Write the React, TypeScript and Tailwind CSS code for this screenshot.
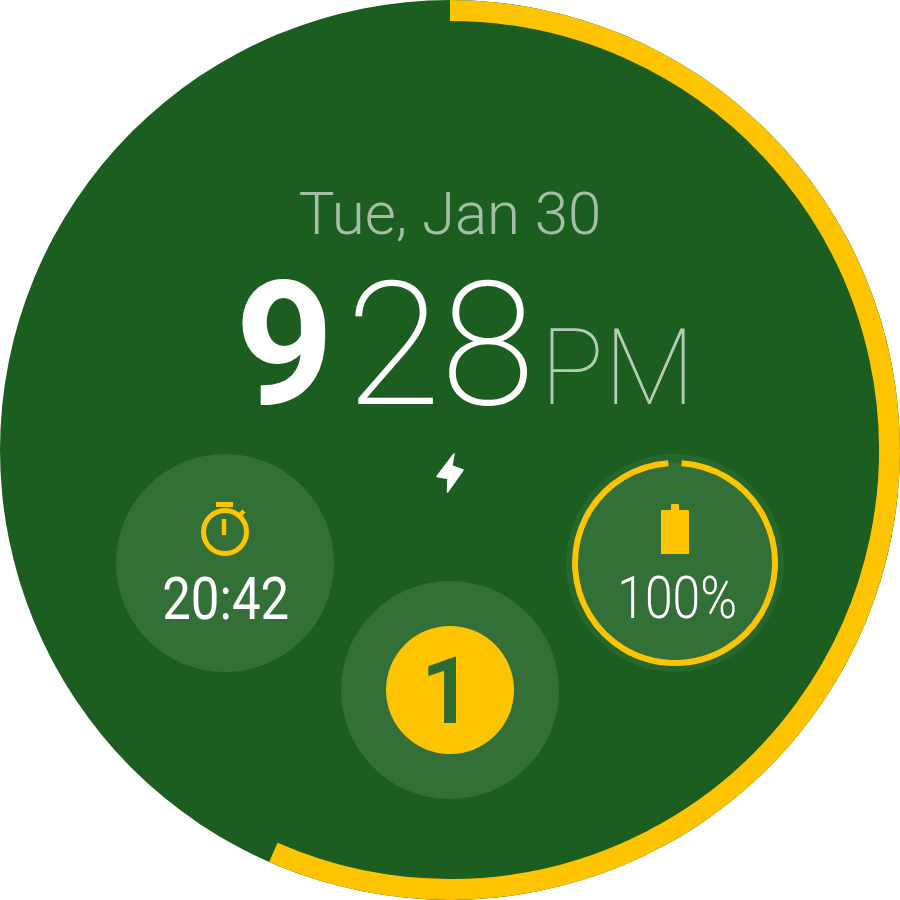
const font = "[font-family:Roboto,'Liberation_Sans',sans-serif]";

function Stopwatch() {
  return (
    <svg width="56" height="56" viewBox="0 0 56 56" className="block" fill="none">
      <circle cx="28" cy="31" r="21.5" stroke="#ffc400" strokeWidth="5" />
      <path d="M19 3.500h17" stroke="#ffc400" strokeWidth="5" />
      <path d="M27 18v16" stroke="#ffc400" strokeWidth="4.500" />
      <path d="M42 15l5-5" stroke="#ffc400" strokeWidth="4.500" />
    </svg>
  );
}

function Battery() {
  return (
    <svg width="28" height="50" viewBox="0 0 28 50" className="block">
      <path d="M10 1q0-1 1-1h6q1 0 1 1v5h9q1 0 1 1v43H0V7q0-1 1-1h9z" fill="#ffc400" />
    </svg>
  );
}

function Bolt() {
  return (
    <svg width="32" height="44" viewBox="435 452 32 44" className="block">
      <path
        d="M455 454l-2 12 11 4-15.500 22 .5-13.500-11-2z"
        fill="#ffffff"
        stroke="#ffffff"
        strokeWidth="1.500"
        strokeLinejoin="round"
      />
    </svg>
  );
}

function Ring({ size, stroke, start, end, color, className }: { size: number; stroke: number; start: number; end: number; color: string; className?: string }) {
  const r = (size - stroke) / 2;
  const c = size / 2;
  const pt = (a: number) => {
    const t = ((a - 90) * Math.PI) / 180;
    return `${c + r * Math.cos(t)} ${c + r * Math.sin(t)}`;
  };
  const large = end - start > 180 ? 1 : 0;
  return (
    <svg width={size} height={size} className={className}>
      <path d={`M${pt(start)}A${r} ${r} 0 ${large} 1 ${pt(end)}`} fill="none" stroke={color} strokeWidth={stroke} />
    </svg>
  );
}

export default function App() {
  return (
    <div className={`w-[900px] h-[900px] bg-white ${font}`}>
      <div className="relative w-[900px] h-[900px] rounded-full bg-[#1b5e20] overflow-hidden flex flex-col items-center">
        <Ring size={900} stroke={21} start={0} end={203.7} color="#ffc400" className="absolute inset-0" />

        <div className="mt-[181px] h-[66px] leading-[66px] text-[60px] font-light text-[#a4bfa6] whitespace-nowrap">Tue, Jan 30</div>

        <div className="mt-[13px] h-[170px] flex items-baseline leading-[170px] whitespace-nowrap ml-[30px]">
          <span className="text-[172px] font-bold text-white">9</span>
          <span className="text-[172px] font-extralight text-white ml-[12px]">28</span>
          <span className="text-[106px] font-thin text-[#b4ccb6] ml-[5px]">PM</span>
        </div>

        <div className="mt-[22px] h-0 flex justify-center">
          <Bolt />
        </div>

        <div className="mt-[2px] w-full px-[116px] flex justify-between items-start">
          <div className="w-[218px] h-[218px] rounded-full bg-[#327038] flex flex-col items-center pt-[47px]">
            <Stopwatch />
            <div className="mt-[14px] ml-[2px] h-[56px] leading-[56px] text-[60px] text-white scale-x-[0.85] whitespace-nowrap">20:42</div>
          </div>

          <div className="relative w-[218px] h-[218px] rounded-full bg-[#27672c] flex items-center justify-center">
            <div className="w-[200px] h-[200px] rounded-full bg-[#327038] flex flex-col items-center pt-[41px]">
              <Battery />
              <div className="mt-[16px] ml-[4px] h-[56px] leading-[56px] text-[60px] font-[350] text-white scale-x-[0.83] whitespace-nowrap">100%</div>
            </div>
            <Ring size={206} stroke={6} start={3.800} end={356.200} color="#ffc400" className="absolute left-[6px] top-[6px]" />
          </div>
        </div>

        <div className="mt-[-91px] w-[218px] h-[218px] rounded-full bg-[#327038] flex items-center justify-center">
          <div className="w-[128px] h-[128px] rounded-full bg-[#ffc400] flex items-center justify-center pt-[4px] pr-[6px] text-[92px] leading-none font-semibold text-[#2d6b33]">1</div>
        </div>
      </div>
    </div>
  );
}
